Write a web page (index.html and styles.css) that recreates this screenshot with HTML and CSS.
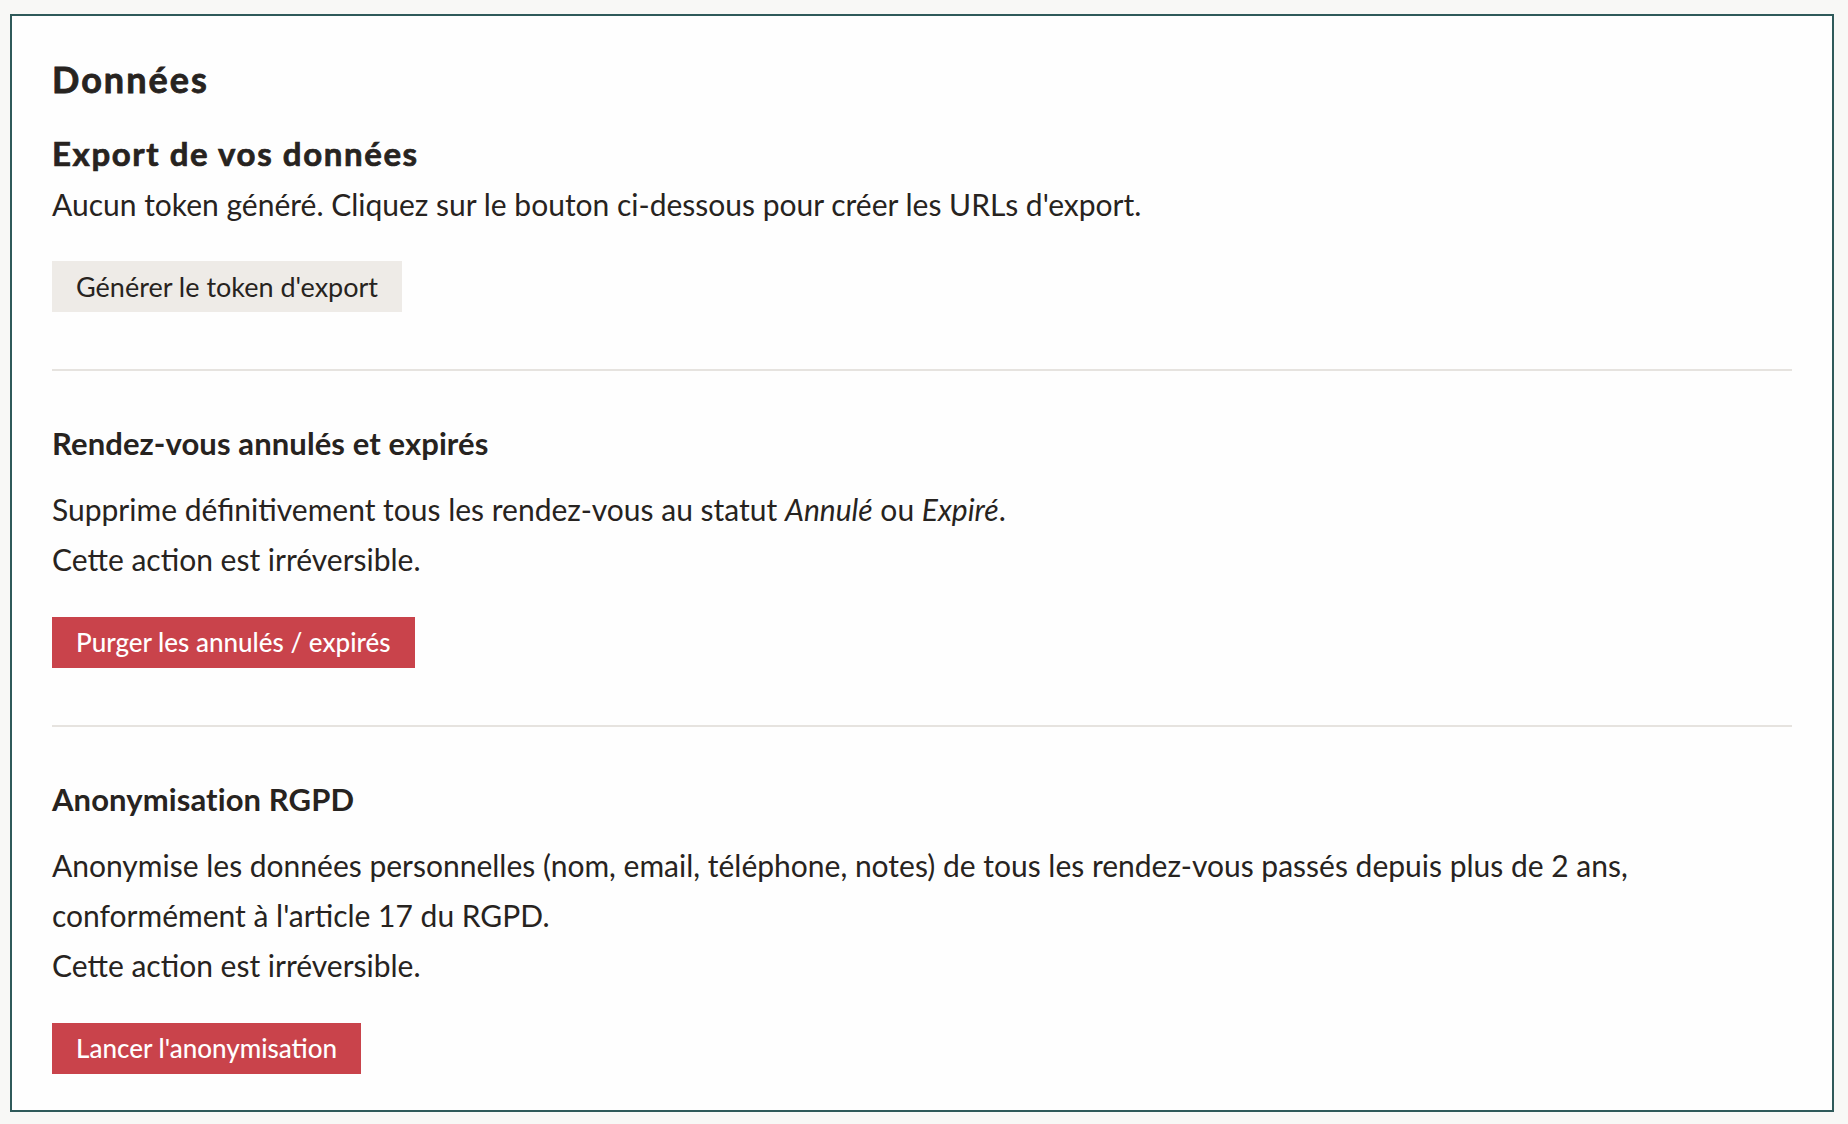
FILE: index.html
```html
<!DOCTYPE html>
<html lang="fr">
<head>
<meta charset="utf-8">
<title>Données</title>
<link rel="stylesheet" href="styles.css">
</head>
<body>
<div class="card">
  <h2 class="title">Données</h2>

  <section class="block first">
    <h3 class="subtitle">Export de vos données</h3>
    <p class="text tight">Aucun token généré. Cliquez sur le bouton ci-dessous pour créer les URLs d'export.</p>
    <button class="btn btn-neutral">Générer le token d'export</button>
  </section>

  <section class="block">
    <h4 class="heading">Rendez-vous annulés et expirés</h4>
    <p class="text">Supprime définitivement tous les rendez-vous au statut <em>Annulé</em> ou <em>Expiré</em>.<br>Cette action est irréversible.</p>
    <button class="btn btn-danger">Purger les annulés / expirés</button>
  </section>

  <section class="block">
    <h4 class="heading">Anonymisation RGPD</h4>
    <p class="text">Anonymise les données personnelles (nom, email, téléphone, notes) de tous les rendez-vous passés depuis plus de 2 ans,<br>conformément à l'article 17 du RGPD.<br>Cette action est irréversible.</p>
    <button class="btn btn-danger">Lancer l'anonymisation</button>
  </section>
</div>
</body>
</html>
```
FILE: styles.css
```css
* { box-sizing: border-box; }

html, body {
  margin: 0;
  padding: 0;
  background: #f8f8f6;
}

body {
  font-family: "Lato", "Liberation Sans", sans-serif;
  color: #272320;
  padding: 14px 14px 12px 10px;
}

.card {
  background: #fefefe;
  border: 2px solid #2f5a5a;
  padding: 40px 40px 36px 40px;
  min-height: 1098px;
}

.title {
  margin: 0 0 29px;
  font-size: 36px;
  line-height: 46px;
  font-weight: 700;
  letter-spacing: 2px;
  -webkit-text-stroke: 0.8px currentColor;
}

.subtitle {
  margin: 0 0 4px;
  font-size: 33px;
  line-height: 44px;
  font-weight: 700;
  letter-spacing: 1.6px;
  -webkit-text-stroke: 0.7px currentColor;
}

.heading {
  margin: 0 0 19px;
  font-size: 31px;
  line-height: 44px;
  font-weight: 700;
  letter-spacing: 0.1px;
}

.text {
  margin: 0 0 33px;
  font-size: 30px;
  line-height: 50px;
  font-weight: 400;
}

.text.tight { margin-bottom: 32px; }

.text em { font-style: italic; }

.btn {
  display: block;
  height: 51px;
  padding: 0 24px;
  border: none;
  border-radius: 0;
  font-family: "Lato", "Liberation Sans", sans-serif;
  font-size: 27px;
  line-height: 51px;
  cursor: pointer;
}

.btn-neutral {
  background: #eeebe7;
  color: #272320;
  font-weight: 400;
}

.btn-danger {
  background: #c9434b;
  color: #ffffff;
  font-size: 26px;
  font-weight: 500;
}

.block + .block {
  margin-top: 57px;
  border-top: 2px solid #e6e3df;
  padding-top: 50px;
}
```
